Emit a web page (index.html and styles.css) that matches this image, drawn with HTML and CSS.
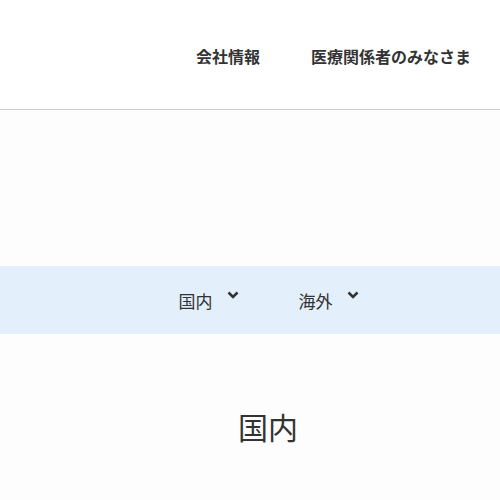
FILE: index.html
```html
<!DOCTYPE html>
<html lang="ja">
<head>
<meta charset="utf-8">
<link rel="stylesheet" href="styles.css">
</head>
<body>
<header class="site-header">
  <nav class="util-nav">
    <a class="util-link" href="#">会社情報</a>
    <a class="util-link" href="#">医療関係者のみなさま</a>
  </nav>
</header>
<div class="hero"></div>
<nav class="region-nav">
  <div class="region-item">国内<svg class="chev" viewBox="0 0 12 10" width="12" height="10"><path d="M1.5 2.5 L6 7 L10.5 2.5" fill="none" stroke="#333" stroke-width="2.6"/></svg></div>
  <div class="region-item">海外<svg class="chev" viewBox="0 0 12 10" width="12" height="10"><path d="M1.5 2.5 L6 7 L10.5 2.5" fill="none" stroke="#333" stroke-width="2.6"/></svg></div>
</nav>
<main class="content">
  <h1 class="title">国内</h1>
</main>
</body>
</html>
```
FILE: styles.css
```css
* { box-sizing: border-box; }
html, body { margin: 0; padding: 0; }
body {
  background: #fdfdfd;
  color: #333;
  font-family: "Noto Sans CJK JP", "Noto Sans", sans-serif;
}
.site-header {
  background: #fff;
  height: 110px;
  border-bottom: 1px solid #cccccc;
  display: flex;
  align-items: center;
  justify-content: flex-end;
  padding-right: 29px;
}
.util-nav {
  display: flex;
  gap: 51px;
  margin-top: 2px;
}
.util-link {
  color: #333;
  text-decoration: none;
  font-weight: 700;
  font-size: 16px;
  line-height: 24px;
}
.hero { height: 156px; }
.region-nav {
  background: #e3effb;
  height: 68px;
  display: flex;
  justify-content: center;
  align-items: center;
  gap: 60px;
  padding-left: 37px;
}
.region-item {
  display: flex;
  align-items: flex-start;
  font-size: 17px;
  line-height: 24px;
  gap: 14px;
  margin-top: 1px;
}
.chev { margin-top: 1px; }
.content {
  display: flex;
  justify-content: center;
  padding-top: 70px;
  padding-left: 36px;
}
.title {
  margin: 0;
  font-size: 30px;
  font-weight: 400;
  line-height: 44px;
}
```
